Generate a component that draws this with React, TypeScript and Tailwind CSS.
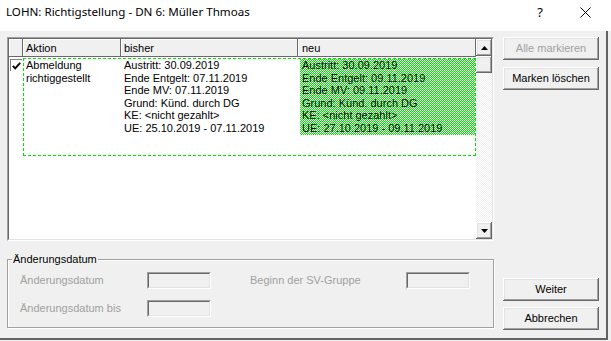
import React from "react";

const btn3d =
  "bg-[#f0f0f0] shadow-[inset_-1px_-1px_0_#696969,inset_1px_1px_0_#ffffff,inset_-2px_-2px_0_#a0a0a0,inset_2px_2px_0_#e3e3e3]";

function Btn({ label, disabled }: { label: string; disabled?: boolean }) {
  return (
    <div
      className={`${btn3d} h-[23px] w-[96px] flex items-center justify-center text-[11px] ${
        disabled ? "text-[#a0a0a0]" : "text-black"
      }`}
    >
      {label}
    </div>
  );
}

function Arrow({ up }: { up?: boolean }) {
  return (
    <div className={`${btn3d} h-[17px] w-[16px] flex items-center justify-center relative z-10`}>
      <svg width="7" height="4" viewBox="0 0 7 4">
        {up ? <polygon points="0,4 7,4 3.5,0" fill="#000" /> : <polygon points="0,0 7,0 3.5,4" fill="#000" />}
      </svg>
    </div>
  );
}

function Dither({ id, dot, bg }: { id: string; dot: string; bg: string }) {
  return (
    <svg className="absolute inset-0 w-full h-full" shapeRendering="crispEdges" aria-hidden>
      <defs>
        <pattern id={id} width="2" height="2" patternUnits="userSpaceOnUse">
          <rect x="0" y="0" width="2" height="2" fill={bg} />
          <rect x="0" y="0" width="1" height="1" fill={dot} />
          <rect x="1" y="1" width="1" height="1" fill={dot} />
        </pattern>
      </defs>
      <rect x="0" y="0" width="100%" height="100%" fill={`url(#${id})`} />
    </svg>
  );
}

function Input() {
  return (
    <div className="h-[17px] w-[64px] border-t border-l border-[#a0a0a0] border-r border-b border-r-white border-b-white">
      <div className="h-full w-full border-t border-l border-[#696969] border-r border-b border-r-[#e3e3e3] border-b-[#e3e3e3] bg-[#f0f0f0]" />
    </div>
  );
}

const hdr =
  "h-[18px] bg-[#f0f0f0] shadow-[inset_-1px_-1px_0_#696969,inset_1px_1px_0_#ffffff] flex items-center text-[11px]";

const bisher = [
  "Austritt: 30.09.2019",
  "Ende Entgelt: 07.11.2019",
  "Ende MV: 07.11.2019",
  "Grund: Künd. durch DG",
  "KE: <nicht gezahlt>",
  "UE: 25.10.2019 - 07.11.2019",
];
const neu = [
  "Austritt: 30.09.2019",
  "Ende Entgelt: 09.11.2019",
  "Ende MV: 09.11.2019",
  "Grund: Künd. durch DG",
  "KE: <nicht gezahlt>",
  "UE: 27.10.2019 - 09.11.2019",
];

export default function App() {
  return (
    <div
      className="w-[611px] h-[341px] bg-[#f0f0f0] overflow-hidden text-black"
      style={{ fontFamily: '"Liberation Sans", Arial, sans-serif' }}
    >
      {/* Title bar */}
      <div className="h-[31px] bg-white flex items-start pt-[4px] pl-[6px]">
        <span className="text-[11.6px] leading-[16px]" style={{ fontFamily: '"Noto Sans", "Open Sans", sans-serif' }}>
          LOHN: Richtigstellung - DN 6: Müller Thmoas
        </span>
        <span className="ml-auto text-[13px] leading-[16px] mr-[37px]" style={{ fontFamily: '"Noto Sans", sans-serif' }}>
          ?
        </span>
        <svg width="11" height="11" viewBox="0 0 11 11" className="mt-[3px] mr-[20px]">
          <line x1="0.5" y1="0.5" x2="10.5" y2="10.5" stroke="#000" strokeWidth="1" />
          <line x1="10.5" y1="0.5" x2="0.5" y2="10.5" stroke="#000" strokeWidth="1" />
        </svg>
      </div>

      {/* Body */}
      <div className="w-[608px] h-[309px] border-r-2 border-b-2 border-[#646464] flex">
        {/* Left column */}
        <div className="ml-[7px] mt-[6px] w-[487px] flex flex-col">
          {/* List box */}
          <div className="h-[204px] w-[487px] border-t border-l border-[#a0a0a0] border-r border-b border-r-white border-b-white">
            <div className="h-full w-full border-t border-l border-[#696969] border-r border-b border-r-[#e3e3e3] border-b-[#e3e3e3] bg-white flex">
              {/* content */}
              <div className="w-[467px] flex flex-col">
                <div className="flex">
                  <div className={`${hdr} w-[14px]`} />
                  <div className={`${hdr} w-[98px] pl-[3px]`}>Aktion</div>
                  <div className={`${hdr} w-[177px] pl-[3px]`}>bisher</div>
                  <div className={`${hdr} w-[178px] pl-[4px]`}>neu</div>
                </div>
                <div className="flex mt-[1px] text-[11px] leading-[12.6px]">
                  <div className="w-[14px] flex justify-center pt-[1px]">
                    <div className="w-[12px] h-[12px] border-t border-l border-[#808080] flex items-center justify-center">
                      <svg width="9" height="8" viewBox="0 0 9 8">
                        <polyline points="0.8,3.8 3.2,6.3 8.2,0.8" fill="none" stroke="#000" strokeWidth="1.9" />
                      </svg>
                    </div>
                  </div>
                  <div className="w-[453px] h-[98px] border border-dashed border-[#00e600] flex">
                    <div className="w-[97px] pl-[2px]">
                      <div>Abmeldung</div>
                      <div>richtiggestellt</div>
                    </div>
                    <div className="w-[177px] pl-[3px]">
                      {bisher.map((t) => (
                        <div key={t}>{t}</div>
                      ))}
                    </div>
                    <div className="w-[177px] pl-[2px]">
                      <div className="relative pl-[2px]">
                        <Dither id="greendots" dot="#00e600" bg="#ffffff" />
                        <div className="relative">
                          {neu.map((t) => (
                            <div key={t}>{t}</div>
                          ))}
                        </div>
                      </div>
                    </div>
                  </div>
                </div>
              </div>
              {/* scrollbar */}
              <div className="relative w-[16px] h-full flex flex-col">
                <Dither id="trackdots" dot="#f0f0f0" bg="#ffffff" />
                <Arrow up />
                <div className={`${btn3d} h-[17px] w-[16px] relative z-10`} />
                <div className="flex-1" />
                <Arrow />
              </div>
            </div>
          </div>

          {/* Group box */}
          <fieldset className="mt-[12px] w-[487px] h-[75px] border border-[#a0a0a0] shadow-[inset_1px_1px_0_#ffffff,1px_1px_0_#ffffff] text-[11px]">
            <legend className="ml-[4px] px-[1px] leading-[13px]">Änderungsdatum</legend>
            <div className="pl-[12px] pt-[6px] grid grid-cols-[127px_64px_39px_156px_64px] gap-y-[11px] items-center text-[#a0a0a0]">
              <div>Änderungsdatum</div>
              <Input />
              <div />
              <div>Beginn der SV-Gruppe</div>
              <Input />
              <div>Änderungsdatum bis</div>
              <Input />
            </div>
          </fieldset>
        </div>

        {/* Right column */}
        <div className="ml-[9px] mt-[6px] flex flex-col">
          <Btn label="Alle markieren" disabled />
          <div className="mt-[7px]">
            <Btn label="Marken löschen" />
          </div>
          <div className="mt-[188px]">
            <Btn label="Weiter" />
          </div>
          <div className="mt-[6px]">
            <Btn label="Abbrechen" />
          </div>
        </div>
      </div>
    </div>
  );
}
